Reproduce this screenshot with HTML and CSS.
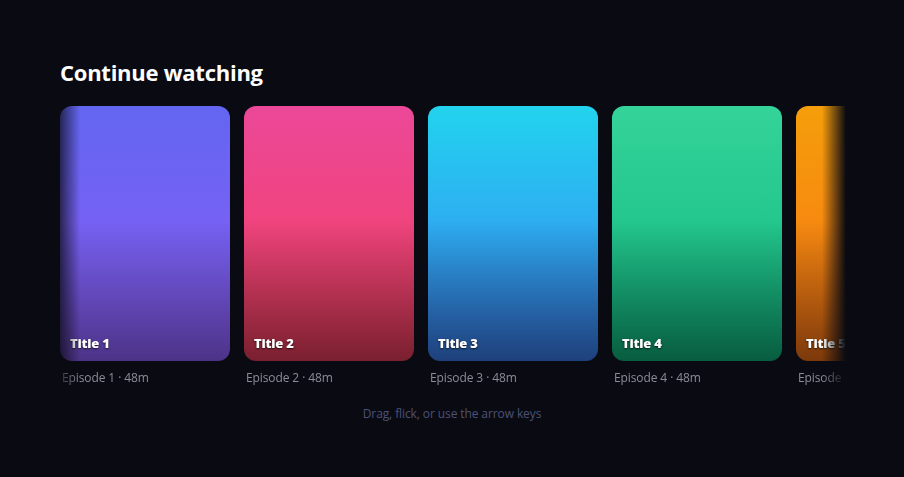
FILE: index.html
```html
<!DOCTYPE html>
<html lang="en">
<head>
<meta charset="utf-8">
<title>Continue watching</title>
<link rel="stylesheet" href="styles.css">
</head>
<body>
<main class="page">
  <h1 class="heading">Continue watching</h1>
  <div class="rail">
    <div class="track">
      <div class="item"><div class="card c1"><span class="title">Title 1</span></div><div class="meta">Episode 1 · 48m</div></div>
      <div class="item"><div class="card c2"><span class="title">Title 2</span></div><div class="meta">Episode 2 · 48m</div></div>
      <div class="item"><div class="card c3"><span class="title">Title 3</span></div><div class="meta">Episode 3 · 48m</div></div>
      <div class="item"><div class="card c4"><span class="title">Title 4</span></div><div class="meta">Episode 4 · 48m</div></div>
      <div class="item"><div class="card c5"><span class="title">Title 5</span></div><div class="meta">Episode 5 · 48m</div></div>
      <div class="item"><div class="card c6"><span class="title">Title 6</span></div><div class="meta">Episode 6 · 48m</div></div>
    </div>
  </div>
  <p class="hint">Drag, flick, or use the arrow keys</p>
</main>
</body>
</html>
```
FILE: styles.css
```css
* { box-sizing: border-box; }
html, body { margin: 0; padding: 0; }
body {
  background: #0a0b12;
  font-family: "Open Sans", "Noto Sans", sans-serif;
  color: #fff;
  width: 904px;
  height: 477px;
  overflow: hidden;
}
.page {
  padding: 56px 58px 0 60px;
}
.heading {
  margin: 0 0 18px;
  font-size: 22px;
  font-weight: 700;
  line-height: 32px;
  letter-spacing: -0.25px;
}
.rail {
  overflow: hidden;
  -webkit-mask-image: linear-gradient(90deg, rgba(0,0,0,0.3) 0, #000 20px, #000 calc(100% - 24px), transparent 100%);
  mask-image: linear-gradient(90deg, rgba(0,0,0,0.3) 0, #000 20px, #000 calc(100% - 24px), transparent 100%);
}
.track {
  display: flex;
  gap: 14px;
}
.item {
  flex: 0 0 170px;
}
.card {
  height: 255px;
  border-radius: 12px;
  display: flex;
  align-items: flex-end;
  padding: 0 10px 9px;
}
.title {
  font-size: 13px;
  font-weight: 800;
  line-height: 18px;
  letter-spacing: -0.2px;
  text-shadow: 0 1px 2px rgba(0,0,0,0.7);
}
.c1 { background: linear-gradient(180deg, rgba(0,0,0,0) 45%, rgba(0,0,0,0.45) 100%), linear-gradient(180deg, #6366f1 0%, #8b5cf6 100%); }
.c2 { background: linear-gradient(180deg, rgba(0,0,0,0) 45%, rgba(0,0,0,0.5) 100%), linear-gradient(180deg, #ec4899 0%, #f43f5e 100%); }
.c3 { background: linear-gradient(180deg, rgba(0,0,0,0) 45%, rgba(0,0,0,0.5) 100%), linear-gradient(180deg, #22d3ee 0%, #3b82f6 100%); }
.c4 { background: linear-gradient(180deg, rgba(0,0,0,0) 45%, rgba(0,0,0,0.5) 100%), linear-gradient(180deg, #34d399 0%, #10b981 100%); }
.c5 { background: linear-gradient(180deg, rgba(0,0,0,0) 45%, rgba(0,0,0,0.5) 100%), linear-gradient(180deg, #f59e0b 0%, #f97316 100%); }
.c6 { background: linear-gradient(180deg, rgba(0,0,0,0) 45%, rgba(0,0,0,0.5) 100%), linear-gradient(180deg, #a855f7 0%, #ec4899 100%); }
.meta {
  margin-top: 9px;
  padding-left: 2px;
  font-size: 12px;
  line-height: 16px;
  letter-spacing: -0.1px;
  color: #8a8d99;
}
.hint {
  margin: 20px 0 0 -2px;
  text-align: center;
  font-size: 12px;
  line-height: 16px;
  letter-spacing: -0.1px;
  color: #4c5178;
}
```
